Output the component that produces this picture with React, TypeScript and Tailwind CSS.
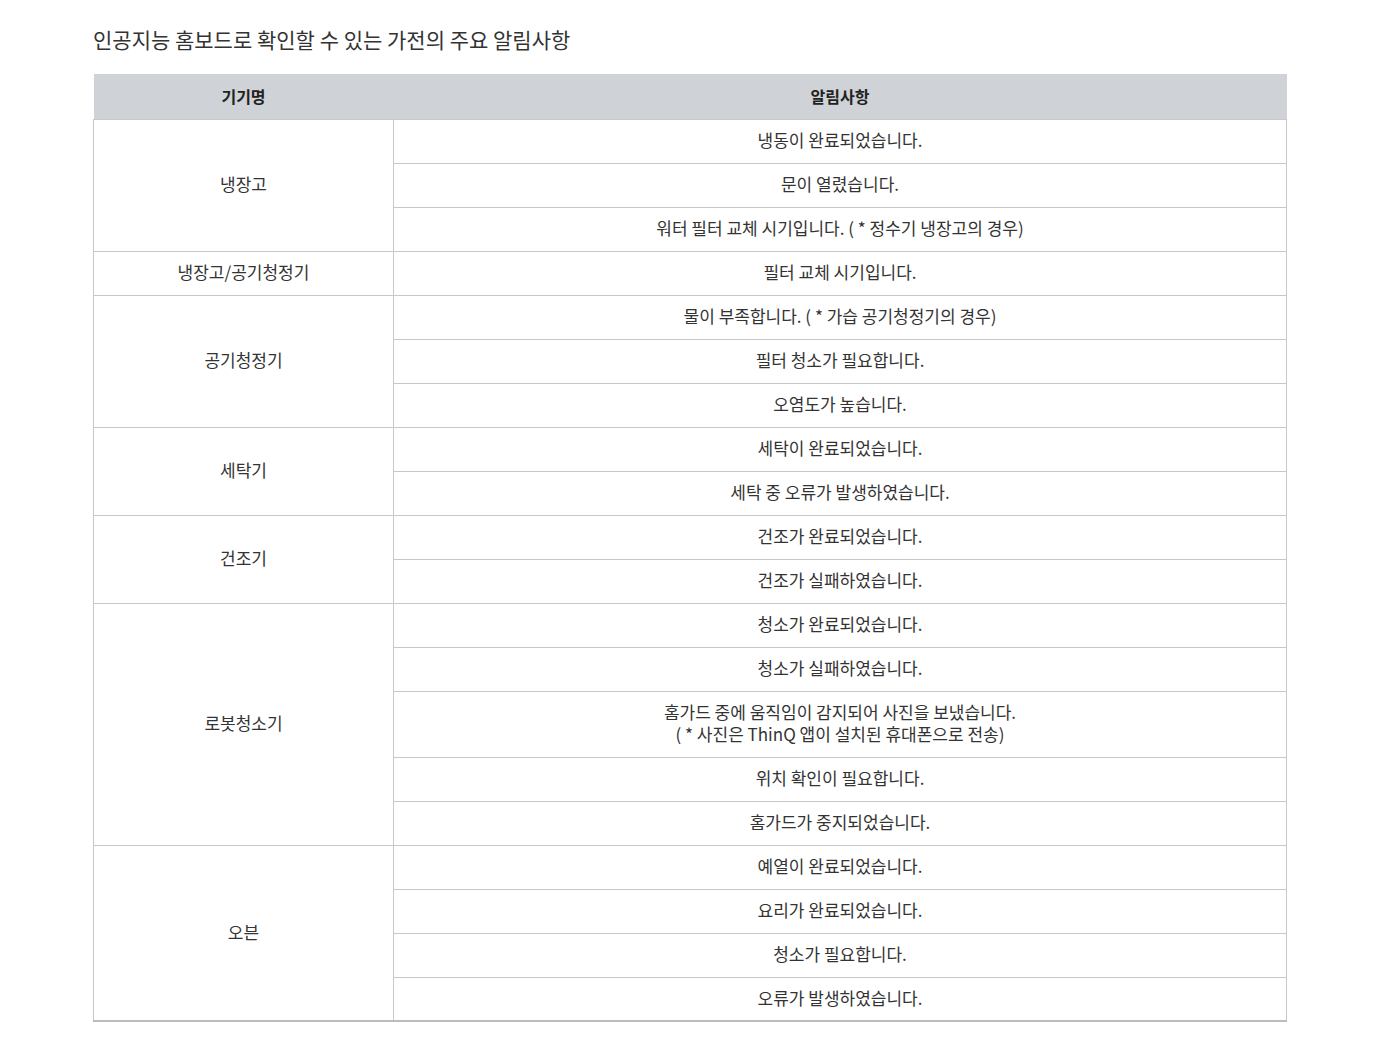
const groups: { name: string; items: string[][] }[] = [
  {
    name: "냉장고",
    items: [
      ["냉동이 완료되었습니다."],
      ["문이 열렸습니다."],
      ["워터 필터 교체 시기입니다. ( * 정수기 냉장고의 경우)"],
    ],
  },
  { name: "냉장고/공기청정기", items: [["필터 교체 시기입니다."]] },
  {
    name: "공기청정기",
    items: [
      ["물이 부족합니다. ( * 가습 공기청정기의 경우)"],
      ["필터 청소가 필요합니다."],
      ["오염도가 높습니다."],
    ],
  },
  {
    name: "세탁기",
    items: [["세탁이 완료되었습니다."], ["세탁 중 오류가 발생하였습니다."]],
  },
  {
    name: "건조기",
    items: [["건조가 완료되었습니다."], ["건조가 실패하였습니다."]],
  },
  {
    name: "로봇청소기",
    items: [
      ["청소가 완료되었습니다."],
      ["청소가 실패하였습니다."],
      [
        "홈가드 중에 움직임이 감지되어 사진을 보냈습니다.",
        "( * 사진은 ThinQ 앱이 설치된 휴대폰으로 전송)",
      ],
      ["위치 확인이 필요합니다."],
      ["홈가드가 중지되었습니다."],
    ],
  },
  {
    name: "오븐",
    items: [
      ["예열이 완료되었습니다."],
      ["요리가 완료되었습니다."],
      ["청소가 필요합니다."],
      ["오류가 발생하였습니다."],
    ],
  },
];

const font = { fontFamily: '"Noto Sans CJK KR", "Noto Sans", sans-serif' };

export default function App() {
  return (
    <div className="bg-white min-h-[1053px] px-[93px] pt-[24px]" style={font}>
      <h2 className="text-[21px] leading-[30px] text-[#333]">
        인공지능 홈보드로 확인할 수 있는 가전의 주요 알림사항
      </h2>

      <table className="mt-[20px] w-[1194px] border-collapse text-[#333] text-[17px]">
        <thead>
          <tr className="bg-[#cfd2d6] h-[45px]">
            <th className="w-[300px] font-bold text-[#222] text-center text-[16px] pb-[1px]">기기명</th>
            <th className="font-bold text-[#222] text-center text-[16px] pb-[1px]">알림사항</th>
          </tr>
        </thead>
        <tbody className="border-b-2 border-b-[#bcbcbc]">
          {groups.map((g) =>
            g.items.map((lines, i) => (
              <tr key={g.name + i}>
                {i === 0 && (
                  <td
                    rowSpan={g.items.length}
                    className="border border-[#c8c8c8] text-center align-middle pb-[2px]"
                  >
                    {g.name}
                  </td>
                )}
                <td
                  className={`border border-[#c8c8c8] text-center leading-[22px] pb-[2px] ${
                    lines.length > 1 ? "h-[66px]" : "h-[44px]"
                  }`}
                >
                  {lines.map((l) => (
                    <div key={l}>{l}</div>
                  ))}
                </td>
              </tr>
            ))
          )}
        </tbody>
      </table>
    </div>
  );
}
